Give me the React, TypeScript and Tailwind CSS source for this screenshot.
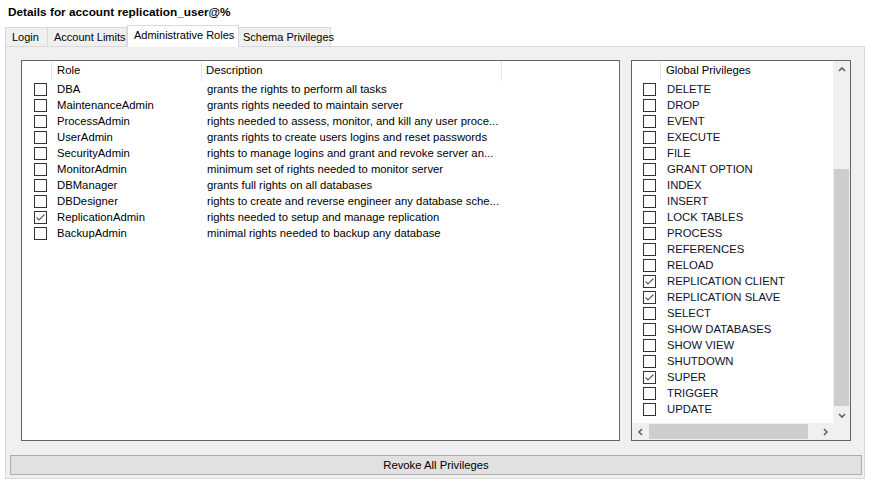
import React from "react";

const roles: [string, string, boolean][] = [
  ["DBA", "grants the rights to perform all tasks", false],
  ["MaintenanceAdmin", "grants rights needed to maintain server", false],
  ["ProcessAdmin", "rights needed to assess, monitor, and kill any user proce...", false],
  ["UserAdmin", "grants rights to create users logins and reset passwords", false],
  ["SecurityAdmin", "rights to manage logins and grant and revoke server an...", false],
  ["MonitorAdmin", "minimum set of rights needed to monitor server", false],
  ["DBManager", "grants full rights on all databases", false],
  ["DBDesigner", "rights to create and reverse engineer any database sche...", false],
  ["ReplicationAdmin", "rights needed to setup and manage replication", true],
  ["BackupAdmin", "minimal rights needed to backup any database", false],
];

const privs: [string, boolean][] = [
  ["DELETE", false],
  ["DROP", false],
  ["EVENT", false],
  ["EXECUTE", false],
  ["FILE", false],
  ["GRANT OPTION", false],
  ["INDEX", false],
  ["INSERT", false],
  ["LOCK TABLES", false],
  ["PROCESS", false],
  ["REFERENCES", false],
  ["RELOAD", false],
  ["REPLICATION CLIENT", true],
  ["REPLICATION SLAVE", true],
  ["SELECT", false],
  ["SHOW DATABASES", false],
  ["SHOW VIEW", false],
  ["SHUTDOWN", false],
  ["SUPER", true],
  ["TRIGGER", false],
  ["UPDATE", false],
];

function Check({ on }: { on: boolean }) {
  return (
    <div className="w-[13px] h-[13px] border border-[#333333] bg-white flex items-center justify-center shrink-0">
      {on && (
        <svg width="11" height="11" viewBox="0 0 11 11">
          <path d="M1.5 5.5 L4 8 L9.5 2.5" fill="none" stroke="#5a5a5a" strokeWidth="1.1" />
        </svg>
      )}
    </div>
  );
}

function Arrow({ dir }: { dir: "up" | "down" | "left" | "right" }) {
  const d = {
    up: "M1 5 L4 2 L7 5",
    down: "M1 3 L4 6 L7 3",
    left: "M5 1 L2 4 L5 7",
    right: "M3 1 L6 4 L3 7",
  }[dir];
  return (
    <svg width="8" height="8" viewBox="0 0 8 8">
      <path d={d} fill="none" stroke="#606060" strokeWidth="1.6" />
    </svg>
  );
}

export default function App() {
  const font = { fontFamily: '"Liberation Sans", Arial, sans-serif' };
  return (
    <div className="w-[873px] h-[487px] bg-white text-[11.3px] text-black overflow-hidden" style={font}>
      <div className="h-[25px] pl-[8px] pt-[4px] font-bold text-[11.8px] leading-[16px] whitespace-nowrap">
        Details for account replication_user@%
      </div>
      <div className="ml-[5px] w-[860px]">
        <div className="flex items-end h-[21px] relative z-10 whitespace-nowrap text-[11px]">
          <div className="h-[19px] pl-[6px] border border-b-0 border-[#d9d9d9] bg-[#f0f0f0] leading-[18px] w-[43px]">Login</div>
          <div className="h-[19px] pl-[6px] border border-b-0 border-l-0 border-[#d9d9d9] bg-[#f0f0f0] leading-[18px] w-[79px]">Account Limits</div>
          <div className="pl-[6px] border border-b-0 border-[#d9d9d9] bg-white leading-[18px] w-[112px] -mb-[1px] h-[22px]">Administrative Roles</div>
          <div className="h-[19px] pl-[4px] border border-b-0 border-l-0 border-[#d9d9d9] bg-[#f0f0f0] leading-[18px] w-[92px]">Schema Privileges</div>
        </div>
        <div className="h-[433px] border border-[#d9d9d9] bg-[#f0f0f0] flex flex-col">
          <div className="flex pt-[13px] pl-[15px] gap-[11px]">
            {/* Roles list */}
            <div className="w-[599px] h-[381px] border border-[#646464] bg-white">
              <div className="flex h-[20px] leading-[19px]">
                <div className="w-[30px] border-r border-[#e5e5e5]" />
                <div className="w-[150px] pl-[5px] border-r border-[#e5e5e5]">Role</div>
                <div className="w-[300px] pl-[4px] border-r border-[#e5e5e5]">Description</div>
              </div>
              <div>
                {roles.map(([r, d, c]) => (
                  <div key={r} className="flex items-center h-[16px]">
                    <div className="w-[30px] flex justify-end pr-[5px]">
                      <Check on={c} />
                    </div>
                    <div className="w-[150px] pl-[5px] whitespace-nowrap">{r}</div>
                    <div className="pl-[5px] whitespace-nowrap">{d}</div>
                  </div>
                ))}
              </div>
            </div>
            {/* Global privileges */}
            <div className="w-[220px] h-[381px] border border-[#646464] bg-white flex flex-col">
              <div className="flex flex-1 min-h-0">
                <div className="flex-1 overflow-hidden">
                  <div className="flex h-[20px] leading-[19px]">
                    <div className="w-[29px] border-r border-[#e5e5e5]" />
                    <div className="pl-[5px]">Global Privileges</div>
                  </div>
                  {privs.map(([p, c]) => (
                    <div key={p} className="flex items-center h-[16px]">
                      <div className="w-[29px] flex justify-end pr-[5px]">
                        <Check on={c} />
                      </div>
                      <div className="pl-[6px] whitespace-nowrap text-[#10102a]">{p}</div>
                    </div>
                  ))}
                </div>
                <div className="w-[17px] bg-[#f0f0f0] flex flex-col">
                  <div className="h-[17px] flex items-center justify-center"><Arrow dir="up" /></div>
                  <div className="flex-1 flex flex-col">
                    <div className="h-[91px]" />
                    <div className="flex-1 bg-[#cdcdcd] mx-[1px]" />
                  </div>
                  <div className="h-[17px] flex items-center justify-center"><Arrow dir="down" /></div>
                </div>
              </div>
              <div className="h-[17px] flex bg-[#f0f0f0]">
                <div className="w-[17px] flex items-center justify-center"><Arrow dir="left" /></div>
                <div className="flex-1 flex items-stretch py-[1px]">
                  <div className="w-[159px] bg-[#cdcdcd]" />
                </div>
                <div className="w-[17px] flex items-center justify-center"><Arrow dir="right" /></div>
                <div className="w-[17px] bg-[#f0f0f0]" />
              </div>
            </div>
          </div>
          <div className="mt-[14px] ml-[4px] w-[852px] h-[20px] border border-[#adadad] bg-[#e1e1e1] flex items-center justify-center leading-[18px]">
            Revoke All Privileges
          </div>
        </div>
      </div>
    </div>
  );
}
